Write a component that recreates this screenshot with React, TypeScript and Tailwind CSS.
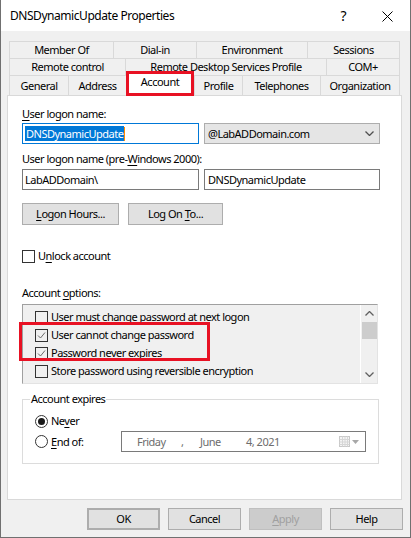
import clsx from 'clsx';

// Windows 10 "Account" tab of an AD user properties dialog

function U({ children }: { children: React.ReactNode }) {
  return <span className="underline decoration-1 underline-offset-[2px]">{children}</span>;
}

function CheckBox({ checked }: { checked?: boolean }) {
  return (
    <span className="flex h-[13px] w-[13px] shrink-0 items-center justify-center border border-[#333333] bg-transparent">
      {checked && (
        <svg width="11" height="11" viewBox="0 0 11 11">
          <polyline points="2,5.5 4.5,8 9,2.5" fill="none" stroke="#6b6b6b" strokeWidth="1" />
        </svg>
      )}
    </span>
  );
}

function Radio({ checked }: { checked?: boolean }) {
  return (
    <span className="flex h-[13px] w-[13px] shrink-0 items-center justify-center rounded-full border border-[#333333] bg-white">
      {checked && <span className="h-[7px] w-[7px] rounded-full bg-[#1a1a1a]" />}
    </span>
  );
}

function Chevron({ up, color = '#606060' }: { up?: boolean; color?: string }) {
  return (
    <svg width="9" height="5" viewBox="0 0 9 5">
      <polyline
        points={up ? '0.5,4.5 4.5,0.5 8.5,4.5' : '0.5,0.5 4.5,4.5 8.5,0.5'}
        fill="none"
        stroke={color}
        strokeWidth="1.3"
      />
    </svg>
  );
}

type TabDef = { label: string; w: string; last?: boolean; active?: boolean };

const tabRows: TabDef[][] = [
  [
    { label: 'Member Of', w: 'w-[104px]' },
    { label: 'Dial-in', w: 'w-[83px]' },
    { label: 'Environment', w: 'w-[111px]' },
    { label: 'Sessions', w: 'w-[93px]', last: true },
  ],
  [
    { label: 'Remote control', w: 'w-[116px]' },
    { label: 'Remote Desktop Services Profile', w: 'w-[201px]' },
    { label: 'COM+', w: 'w-[74px]', last: true },
  ],
  [
    { label: 'General', w: 'w-[59px]' },
    { label: 'Address', w: 'w-[58px]' },
    { label: 'Account', w: 'w-[68px]', active: true },
    { label: 'Profile', w: 'w-[48px]' },
    { label: 'Telephones', w: 'w-[78px]' },
    { label: 'Organization', w: 'w-[80px]', last: true },
  ],
];

function Tab({ tab }: { tab: TabDef }) {
  if (tab.active) {
    return (
      <div
        className={clsx(
          'relative z-10 -mb-[1px] -mt-[4px] flex h-[25px] items-start justify-center border-[3px] border-[#e81123] bg-white',
          tab.w
        )}
      >
        {tab.label}
      </div>
    );
  }
  return (
    <div
      className={clsx(
        'flex h-full items-center justify-center border-l border-t border-[#d9d9d9] bg-[#f0f0f0]',
        tab.last && 'border-r',
        tab.w
      )}
    >
      {tab.label}
    </div>
  );
}

const options = [
  { label: 'User must change password at next logon', checked: false },
  { label: 'User cannot change password', checked: true },
  { label: 'Password never expires', checked: true },
  { label: 'Store password using reversible encryption', checked: false },
];

function WinButton({ children, className }: { children: React.ReactNode; className?: string }) {
  return (
    <button
      className={clsx(
        'flex h-[22px] items-center justify-center border border-[#adadad] bg-[#e1e1e1] text-black',
        className
      )}
    >
      {children}
    </button>
  );
}

export default function App() {
  return (
    <div className="h-[538px] w-[411px] border-x border-b border-[#707070] bg-[#f0f0f0] font-['Noto_Sans',sans-serif] text-[11px] leading-[16px] tracking-[-0.5px] text-black">
      {/* Title bar */}
      <div className="flex h-[31px] items-center bg-white pt-[1px]">
        <span className="ml-[9px] text-[12px] tracking-[-0.45px]">DNSDynamicUpdate Properties</span>
        <span className="ml-auto mr-[36px] text-[14px]">?</span>
        <svg className="mr-[17px]" width="11" height="11" viewBox="0 0 11 11">
          <path d="M0.5 0.5 L10.5 10.5 M10.5 0.5 L0.5 10.5" stroke="#000" strokeWidth="1" />
        </svg>
      </div>

      {/* Tabs */}
      <div className="mt-[10px]">
        <div className="ml-[8px] flex h-[17px]">
          {tabRows[0].map((t) => (
            <Tab key={t.label} tab={t} />
          ))}
        </div>
        <div className="ml-[8px] flex h-[17px]">
          {tabRows[1].map((t) => (
            <Tab key={t.label} tab={t} />
          ))}
        </div>
        <div className="ml-[8px] flex h-[20px]">
          {tabRows[2].map((t) => (
            <Tab key={t.label} tab={t} />
          ))}
        </div>
      </div>

      {/* Tab page */}
      <div className="ml-[6px] flex h-[405px] w-[395px] flex-col border border-[#d9d9d9] bg-white pl-[14px]">
        <div className="mt-[10px]">
          <U>U</U>ser logon name:
        </div>
        <div className="mt-[1px] flex gap-[5px]">
          <div className="flex h-[21px] w-[177px] items-center border border-[#0078d7] pl-[2px]">
            <span className="bg-[#0078d7] px-[1px] leading-[15px] text-white">DNSDynamicUpdate</span>
            <span className="h-[14px] w-[1px] bg-[#ff8c00]" />
          </div>
          <div className="flex h-[21px] w-[176px] items-center border border-[#adadad] bg-[#e5e5e5] pl-[3px] pr-[5px]">
            <span>@LabADDomain.com</span>
            <span className="ml-auto">
              <Chevron color="#505050" />
            </span>
          </div>
        </div>

        <div className="mt-[7px]">
          User logon name (pre-<U>W</U>indows 2000):
        </div>
        <div className="mt-[2px] flex gap-[5px]">
          <div className="flex h-[21px] w-[177px] items-center border border-[#7a7a7a] pl-[2px]">LabADDomain\</div>
          <div className="flex h-[21px] w-[176px] items-center border border-[#7a7a7a] pl-[3px]">DNSDynamicUpdate</div>
        </div>

        <div className="mt-[13px] flex gap-[9px]">
          <WinButton className="w-[97px]">
            <span>
              <U>L</U>ogon Hours...
            </span>
          </WinButton>
          <WinButton className="w-[95px]">
            <span>
              Log On <U>T</U>o...
            </span>
          </WinButton>
        </div>

        <div className="mt-[23px] flex h-[16px] items-center gap-[3px]">
          <CheckBox />
          <span>
            U<U>n</U>lock account
          </span>
        </div>

        <div className="mt-[21px]">
          Account <U>o</U>ptions:
        </div>

        <div className="relative mt-[3px] w-[356px]">
          <div className="flex h-[80px] overflow-hidden border-b border-l border-r border-t border-[#a0a0a0] border-b-[#e3e3e3] border-r-[#e3e3e3] bg-[#f0f0f0]">
            <div className="flex flex-1 flex-col pl-[12px] pt-[3px]">
              {options.map((o) => (
                <div key={o.label} className="flex h-[18px] items-center gap-[3px]">
                  <CheckBox checked={o.checked} />
                  <span className="whitespace-nowrap">{o.label}</span>
                </div>
              ))}
            </div>
            <div className="flex w-[17px] flex-col border-l border-white">
              <div className="flex h-[17px] items-center justify-center">
                <Chevron up />
              </div>
              <div className="ml-[1px] h-[17px] bg-[#cdcdcd]" />
              <div className="flex-1" />
              <div className="flex h-[17px] items-center justify-center">
                <Chevron />
              </div>
            </div>
          </div>
          {/* highlight annotation */}
          <div className="pointer-events-none absolute left-[-3px] top-[18px] h-[39px] w-[191px] border-[3px] border-[#e81123]" />
        </div>

        <fieldset className="mt-[7px] w-[357px] border border-[#dcdcdc] pb-[11px]">
          <legend className="ml-[7px] px-[1px]">Account expires</legend>
          <div className="pl-[12px] pt-[6px]">
            <div className="flex h-[16px] items-center gap-[3px]">
              <Radio checked />
              <span>
                Ne<U>v</U>er
              </span>
            </div>
            <div className="mt-[2px] flex h-[21px] items-center">
              <Radio />
              <span className="ml-[3px] w-[70px]">
                <U>E</U>nd of:
              </span>
              <div className="flex h-[21px] w-[245px] items-center border border-[#7a7a7a] pl-[15px] text-[#6d6d6d]">
                <span className="w-[44px]">Friday</span>
                <span className="w-[19px]">,</span>
                <span className="w-[46px]">June</span>
                <span>4, 2021</span>
                <span className="ml-auto mr-[6px] flex items-center gap-[2px]">
                  <svg width="11" height="11" viewBox="0 0 11 11">
                    <rect x="0.5" y="0.5" width="10" height="10" fill="#f4f4f4" stroke="#c8c8c8" />
                    <path d="M0.5 3.5 H10.5 M0.5 6 H10.5 M0.5 8.5 H10.5 M3.5 0.5 V10.5 M6 0.5 V10.5 M8.5 0.5 V10.5" stroke="#d6d6d6" strokeWidth="1" />
                  </svg>
                  <svg width="7" height="4" viewBox="0 0 7 4">
                    <polygon points="0,0 7,0 3.5,4" fill="#a8a8a8" />
                  </svg>
                </span>
              </div>
            </div>
          </div>
        </fieldset>
      </div>

      {/* Dialog buttons */}
      <div className="mt-[8px] flex gap-[8px] pl-[86px]">
        <WinButton className="w-[73px] border-2 border-[#0078d7]">OK</WinButton>
        <WinButton className="w-[73px]">Cancel</WinButton>
        <button className="flex h-[22px] w-[73px] items-center justify-center border border-[#bfbfbf] bg-[#cccccc] text-[#a0a0a0]">
          <span>
            <U>A</U>pply
          </span>
        </button>
        <WinButton className="w-[73px]">Help</WinButton>
      </div>
    </div>
  );
}
